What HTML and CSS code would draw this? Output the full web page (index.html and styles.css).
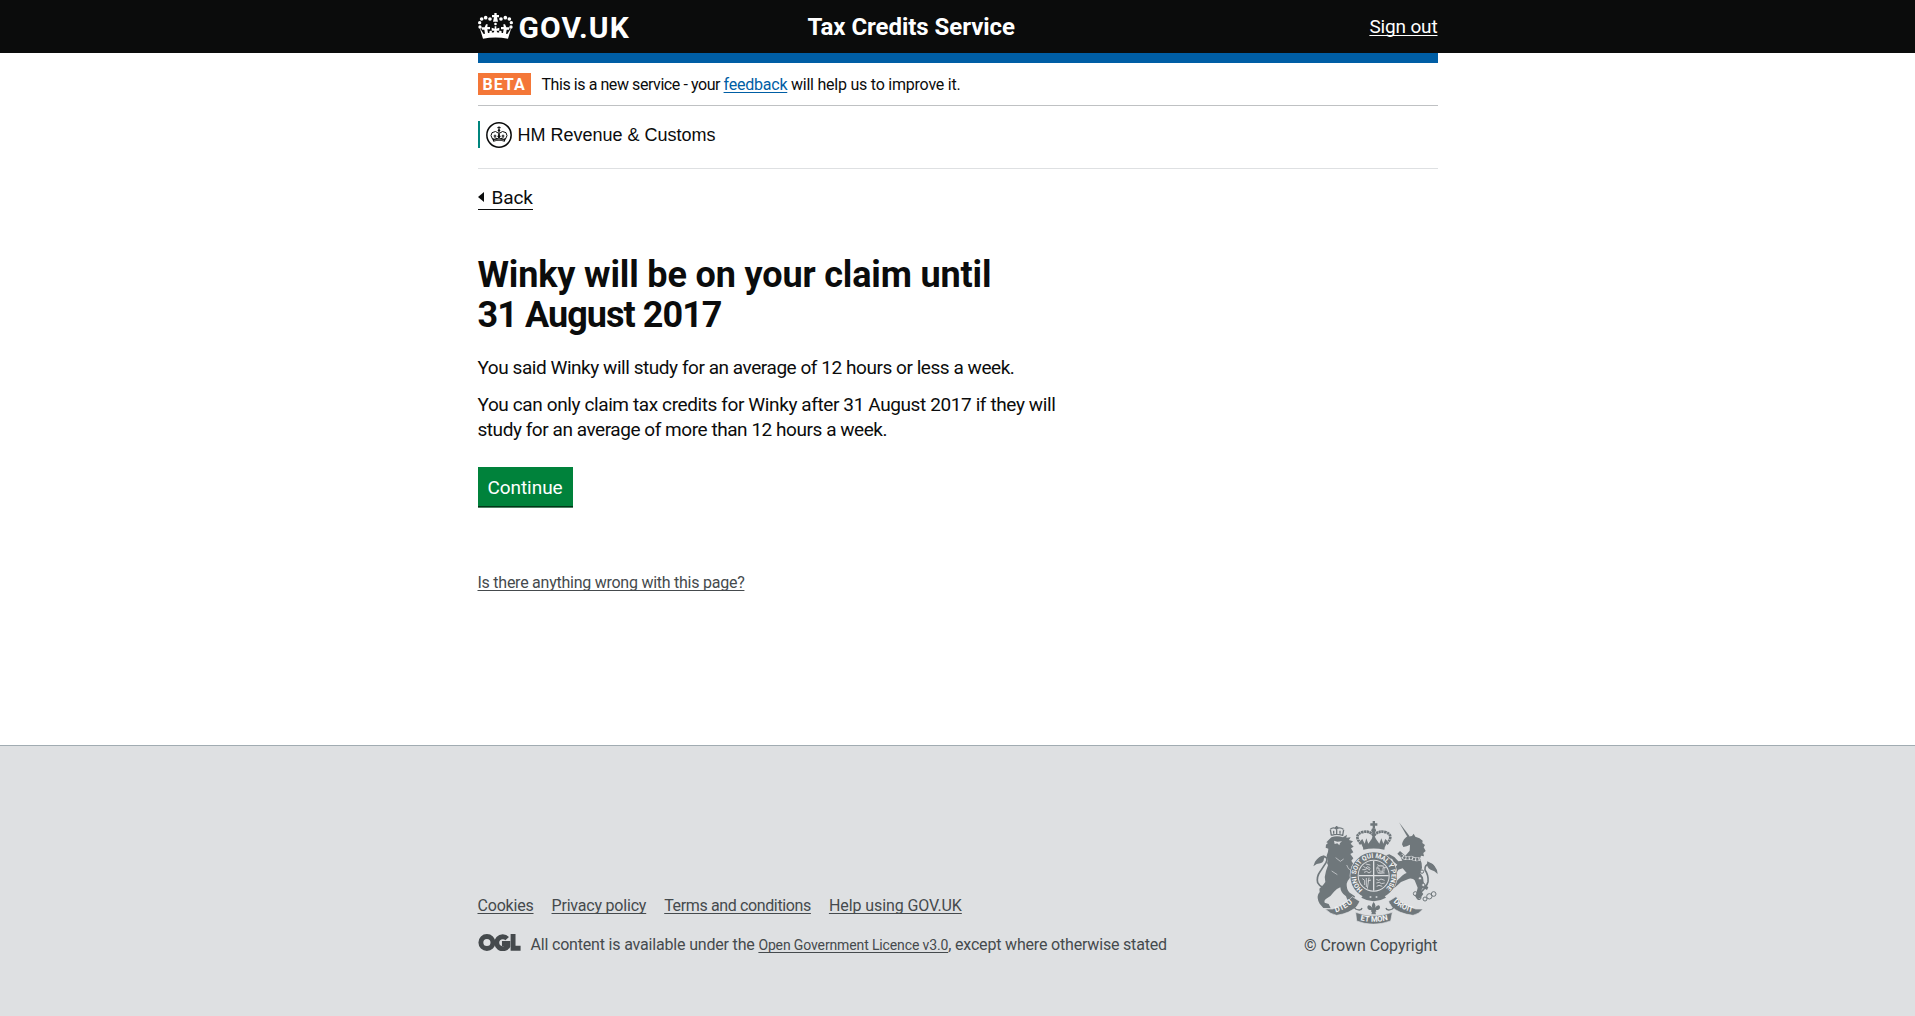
FILE: index.html
```html
<!DOCTYPE html>
<html lang="en">
<head>
<meta charset="utf-8">
<title>Tax Credits Service - GOV.UK</title>
<link rel="stylesheet" href="styles.css">
</head>
<body>
<header class="site-header">
  <div class="container header-row">
    <a class="logo" href="#">
      <svg class="logo-crown" viewBox="24 38 105 78" aria-hidden="true">
        <g fill="#fff">
          <path d="M73 38h7v6h7v7h-6l3 13h-15l3-13h-6v-7h7z"/>
          <circle cx="60" cy="56" r="5.500"/><circle cx="47" cy="52" r="5.500"/><circle cx="35" cy="56" r="5.500"/><circle cx="29" cy="67" r="5"/><circle cx="30" cy="80" r="5"/>
          <circle cx="93" cy="56" r="5.500"/><circle cx="106" cy="52" r="5.500"/><circle cx="118" cy="56" r="5.500"/><circle cx="124" cy="67" r="5"/><circle cx="123" cy="80" r="5"/>
          <circle cx="76.500" cy="71" r="4"/>
          <path d="M29 82l12 19q35-10 71 0l12-19-10 33q-38-7-75 0z"/>
          <path d="M48 72h5l-1 8h8v7h-8l3 17-9 2-3-18h-7l-2-7h10zM105 72h-5l1 8h-8v7h8l-3 17 9 2 3-18h7l2-7h-10zM74 78h5v7l9-3v9l-8 0 3 11h-13l3-11h-8v-9l9 3z"/>
          <circle cx="62" cy="95" r="4"/><circle cx="91" cy="95" r="4"/>
        </g>
      </svg>
      <span>GOV.UK</span>
    </a>
    <a class="service-name" href="#">Tax Credits Service</a>
    <a class="sign-out" href="#">Sign out</a>
  </div>
</header>

<main class="container main">
  <div class="blue-bar"></div>
  <div class="phase-banner">
    <strong class="phase-tag">BETA</strong>
    <span><span class="banner-lead">This is a new service - your </span><a href="#">feedback</a> will help us to improve it.</span>
  </div>
  <div class="organisation">
    <div class="organisation-logo">
      <svg class="organisation-crest" viewBox="0 0 78 78" aria-hidden="true">
        <circle cx="39" cy="39" r="36.500" fill="none" stroke="#0b0c0c" stroke-width="4.500"/>
        <g fill="none" stroke="#0b0c0c" stroke-width="3">
          <path d="M20 52q-9-12-2-20 11-8 20 2v15M58 52q9-12 2-20-11-8-20 2v15"/>
          <path d="M39 13v20M34 17h10M27 38v10M23 42h8M51 38v10M47 42h8M39 39v10M34 43h10"/>
        </g>
        <circle cx="39" cy="25" r="3.500" fill="#0b0c0c"/>
        <path d="M18 48l8 2 6-3 7 3 7-3 6 3 8-2-4 11q-17-5-34 0z" fill="#0b0c0c"/>
        <path d="M24 55q15-4 30 0" fill="none" stroke="#fff" stroke-width="1.500"/>
      </svg>
      <span>HM Revenue &amp; Customs</span>
    </div>
  </div>

  <a class="back" href="#"><span class="back-arrow"></span>Back</a>

  <h1>Winky will be on your claim until<br><span class="date">31 August 2017</span></h1>
  <div class="copy">
    <p>You said Winky will study for an average of 12 hours or less a week.</p>
    <p><span class="loose">You can only claim tax credits for Winky after 31 August 2017 if they will</span><br>study for an average of more than 12 hours a week.</p>
  </div>
  <button class="button" type="button">Continue</button>
  <a class="report" href="#">Is there anything wrong with this page?</a>
</main>

<footer class="footer">
  <div class="container footer-row">
    <div class="footer-meta">
      <nav class="footer-links">
        <a class="privacy" href="#">Cookies</a>
        <a class="privacy" href="#">Privacy policy</a>
        <a class="terms" href="#">Terms and conditions</a>
        <a class="help" href="#">Help using GOV.UK</a>
      </nav>
      <div class="licence">
        <svg class="ogl" viewBox="0 0 129 52" aria-hidden="true">
          <g fill="none" stroke="#454a4d" stroke-width="15">
            <circle cx="26" cy="26" r="18.500"/>
            <path d="M88 14a18.500 18.500 0 1 0 2 23v-8h-18"/>
            <path d="M106 0v43.500h23"/>
          </g>
        </svg>
        <p>All content is available under the <a href="#">Open Government Licence v3.0</a>, except where otherwise stated</p>
      </div>
    </div>
    <a class="copyright" href="#">
      <svg class="crest" viewBox="69 33 375 309" aria-hidden="true">
        <defs>
          <path id="garter" d="M216 254A59 59 0 1 1 288 253"/>
          <path id="motto-left" d="M137 307Q170 298 192 274"/>
          <path id="motto-mid" d="M207 330Q251 341 298 329"/>
          <path id="motto-right" d="M310 276Q333 300 371 307"/>
        </defs>
        <g fill="#6f777b">
          <!-- lion -->
          <path d="M124 82q17-6 35 0l12-8-2 9 13-1-5 8 12 4-7 7 9 9-8 5 7 12-9 5 9 13-6 7q10 14 9 26l-4 13q11 11 8 21-5 9-11 0l-6-9q-8 9-10 18-1 17 9 27l16 11-4 10h-19l-4-10q-16-10-17-27-11 4-19 13-9 13-21 20-10 6-7 13l12 4 6 13-22-1-11-13-4-8q-6-16 4-27l-1-10q12-10 18-20-4-16 2-33l6-17q-5-8-1-14l-3-15 4-12 1-9-8-3 1-9 6-5-5-2z"/>
          <!-- unicorn -->
          <path d="M327 37l32 42-5 5z"/>
          <path d="M353 80l13-2 5-7 5 9q14 3 22 12l-1 7 8 6-4 7 6 11-7 6 2 10-9-2-3 9q7 13 6 27l-5 17 8 12 2 15q4 9 14 15l-4 8-12-7-6 9 7 10-9 13-9 3-7-10 4-8 4-17-9-22q-5-7-17-5l-24 10-14 13-11 9-15-3 10-12 16-9 19-18q7-6 12-7l-12-14-13 4-7 14-9-7 5-13 8-9-11-9-5-9-16 1-7-10 15-4 15 8 12 13 12-2-6-12-9-9 8-8 16 14 13-15 1-18-10 5-10 2-4-8q3-16 17-25z"/>
          <!-- royal crown -->
          <path d="M218 107q33-8 67 0l-2 12q-32-7-63 0z"/>
          <path d="M210 94l7-7 7 14 5-16 6 16 10-14 6-14 7 14 10 14 6-16 6 16 6-14 7 7-8 16q-34-8-67 0z"/>
          <path d="M248 33h7v7h7v7h-7v8h-7v-8h-7v-7h7z"/>
          <circle cx="251" cy="61" r="7"/>
        </g>
        <!-- lion's crown -->
        <path d="M124 76q17-6 34 0l3-17M124 76l-3-17M121 58q8-8 18-1 11-7 21 1M140 48v24M135 52h10M131 62v9M150 62v9" fill="none" stroke="#6f777b" stroke-width="4"/>
        <g fill="none" stroke="#6f777b">
          <path d="M113 226Q96 241 83 218q-4-18 8-34l17-26q8-16-6-18-11 0-14 11" stroke-width="5"/>
          <path d="M103 136q-17 3-28 19l-5 14q10-9 21-9 13-3 12-24z" fill="#6f777b" stroke="none"/>
          <path d="M391 247q18-14 23-32 2-20-9-35-2-17 14-18 15 3 12 18" stroke-width="5"/>
          <path d="M412 154q-5 18 10 25 12 3 21 13-1-26-31-38z" fill="#6f777b" stroke="none"/>
          <path d="M213 102Q190 76 215 67q22-7 35 9M290 102Q313 76 288 67q-22-7-35 9M251 65v40" stroke-width="8" stroke-dasharray="7 1.500"/>
          <g stroke-width="3">
            <circle cx="376" cy="251" r="6"/><circle cx="387" cy="263" r="6"/><circle cx="405" cy="267" r="6"/><circle cx="418" cy="259" r="8"/><circle cx="431" cy="252" r="7"/>
          </g>
        </g>
        <path d="M332 135q13 14 31 8 13 8 27 3" fill="none" stroke="#dee0e2" stroke-width="11"/>
        <path d="M332 135q13 14 31 8 13 8 27 3" fill="none" stroke="#6f777b" stroke-width="8" stroke-dasharray="7 3"/>
        <g fill="#dee0e2" stroke="#6f777b" stroke-width="3">
          <circle cx="396" cy="185" r="5"/><circle cx="390" cy="205" r="5"/><circle cx="400" cy="225" r="5"/>
        </g>
        <path d="M132 92l10 3 14-1-6 5-2 7-6-6-8 2z" fill="#dee0e2"/>
        <path d="M137 143l14 11 10-7M170 165q3 13 16 18M125 183l17 11" fill="none" stroke="#dee0e2" stroke-width="2"/>

        <!-- garter and quartered shield -->
        <g transform="translate(0 -10)">
          <circle cx="251" cy="207" r="72" fill="#dee0e2"/>
          <circle cx="251" cy="207" r="59" fill="none" stroke="#6f777b" stroke-width="22"/>
          <circle cx="251" cy="207" r="45" fill="#6f777b"/>
          <g fill="none" stroke="#dee0e2">
            <path d="M251 162v90M206 207h90" stroke-width="4"/>
            <path d="M220 179l7 5 6-4 8 5M217 189h9l5-4 9 5M222 197l8-3 7 5 7-5M227 172l14 3M262 174l7 4 12 0M259 184h8v9l12 1v-11h10M263 199h21M217 216l7 5v14M229 214v27M237 213l-5 33M243 220l-10 3M259 218l7 3 7-4 11 4M259 229l9-2 6 4 10-2M260 239l7-3 10 3" stroke-width="2.500"/>
            <circle cx="272" cy="188" r="12" stroke-width="1.500"/>
          </g>
          <text class="crest-text" font-size="20" dy="6"><textPath href="#garter" startOffset="2" textLength="284">HONI SOIT QUI MAL Y PENSE</textPath></text>
          <path d="M221 264q30 17 60 0l7 9q-37 21-74 0z" fill="#6f777b"/>
          <path d="M239 271h5M257 271h5" stroke="#dee0e2" stroke-width="4"/>
        </g>

        <!-- motto scrolls -->
        <g fill="#6f777b" stroke="#dee0e2" stroke-width="2">
          <path d="M106 297l22 0q36-12 59-37l22 14-8 15q-21 21-61 27-19-3-34-19z"/>
          <path d="M399 297l-22 0q-39-13-59-37l-22 14 8 15q21 22 65 27 17-3 30-19z"/>
          <path d="M197 307q53 21 110 0l-5 26q-53 19-102 0z"/>
        </g>
        <g fill="none" stroke="#6f777b" stroke-width="4">
          <path d="M205 277q-18 12-8 20 16 7 19-3M299 277q18 12 8 20-16 7-19-3"/>
        </g>
        <path d="M251 276q9 11 3 19 11-15 16-5 1 10-12 10l1 5h-3l2 8h-14l2-8h-3l1-5q-13 0-12-10 5-10 16 5-6-8 3-19z" fill="#6f777b"/>
        <g class="crest-text" font-size="23">
          <text><textPath href="#motto-left" textLength="60">DIEU</textPath></text>
          <text><textPath href="#motto-mid" startOffset="4" textLength="84">ET MON</textPath></text>
          <text><textPath href="#motto-right" textLength="66">DROIT</textPath></text>
        </g>
      </svg>
      <span>© Crown Copyright</span>
    </a>
  </div>
</footer>
</body>
</html>
```
FILE: styles.css
```css
* {
  box-sizing: border-box;
}

body {
  margin: 0;
  min-height: 1016px;
  display: flex;
  flex-direction: column;
  color: #0b0c0c;
  background: #fff;
  font: 16px/20px Roboto, "Liberation Sans", sans-serif;
}

p, h1 {
  margin: 0;
}

a {
  color: inherit;
  text-decoration-thickness: 1px;
  text-underline-offset: 2px;
  text-decoration-skip-ink: none;
}

.container {
  width: 960px;
  margin: 0 auto;
}

/* Header */
.site-header {
  height: 53px;
  background: #0b0c0c;
  color: #fff;
}

.header-row {
  height: 53px;
  display: grid;
  grid-template-columns: 330px 1fr auto;
  align-items: start;
}

.header-row a {
  text-decoration: none;
}

.logo {
  display: flex;
  gap: 6px;
  padding-top: 13px;
  font: bold 30px/30px Roboto, sans-serif;
  letter-spacing: 1.100px;
}

.logo-crown {
  width: 35px;
  height: 26px;
}

.service-name {
  padding-top: 12px;
  font: bold 24px/30px Roboto, sans-serif;
  letter-spacing: -0.050px;
}

.header-row .sign-out {
  padding-top: 15px;
  font-size: 19px;
  line-height: 24px;
  letter-spacing: -0.150px;
  text-decoration: underline 1px;
  text-underline-offset: 2px;
}

/* Page content */
.main {
  height: 692px;
  display: flex;
  flex-direction: column;
  align-items: flex-start;
}

.blue-bar {
  width: 100%;
  height: 10px;
  background: #005ea5;
}

.phase-banner {
  width: 100%;
  height: 43px;
  display: flex;
  align-items: flex-start;
  gap: 11px;
  padding-top: 10px;
  border-bottom: 1px solid #bfc1c3;
  line-height: 23px;
  letter-spacing: -0.230px;
}

.banner-lead {
  letter-spacing: -0.430px;
}

.phase-banner a {
  color: #005ea5;
}

.phase-tag {
  width: 53px;
  height: 22px;
  padding-left: 5px;
  background: #f47738;
  color: #fff;
  line-height: 23px;
  letter-spacing: 1px;
}

.organisation {
  width: 100%;
  height: 63px;
  padding-top: 15px;
  border-bottom: 1px solid #dee0e2;
}

.organisation-logo {
  height: 27px;
  display: flex;
  align-items: center;
  gap: 6px;
  padding-left: 6px;
  border-left: 2px solid #00857d;
  font: 18px/27px "Liberation Sans", sans-serif;
}

.organisation-logo span {
  padding-top: 2px;
}

.organisation-crest {
  width: 26px;
  height: 26px;
}

.back {
  height: 25px;
  display: flex;
  margin-top: 16px;
  border-bottom: 1px solid #0b0c0c;
  font-size: 19px;
  line-height: 26px;
  letter-spacing: -0.100px;
  text-decoration: none;
}

.back-arrow {
  align-self: flex-start;
  margin: 7px 8px 0 0;
  border: solid transparent;
  border-width: 5px 6px 5px 0;
  border-right-color: #0b0c0c;
}

h1 {
  margin-top: 45px;
  font-size: 36px;
  line-height: 40px;
  letter-spacing: -0.150px;
}

.date {
  letter-spacing: -0.950px;
}

.copy {
  display: grid;
  gap: 12px;
  margin-top: 20px;
  font-size: 19px;
  line-height: 25px;
  letter-spacing: -0.450px;
}

.loose {
  letter-spacing: -0.390px;
}

.button {
  width: 95px;
  height: 40px;
  margin-top: 25px;
  padding: 2px 0 0;
  border: 0;
  background: #00823b;
  box-shadow: inset 0 -1px 0 #003618, 0 1px 0 #4f8163;
  color: #fff;
  font: 19px/38px Roboto, sans-serif;
  letter-spacing: -0.050px;
}

.report {
  margin-top: 66px;
  color: #454a4d;
  letter-spacing: -0.250px;
}

/* Footer */
.footer {
  flex: 1;
  background: #dee0e2;
  border-top: 1px solid #a1acb2;
  color: #454a4d;
}

.footer-row {
  display: flex;
  justify-content: space-between;
  padding-top: 75px;
}

.footer-meta {
  padding-top: 75px;
}

.footer-links {
  display: flex;
  gap: 18px;
}

.privacy {
  letter-spacing: -0.200px;
}

.terms {
  letter-spacing: -0.370px;
}

.help {
  letter-spacing: -0.080px;
}

.licence {
  display: flex;
  gap: 10px;
  margin-top: 18px;
  letter-spacing: -0.180px;
}

.licence p {
  padding-top: 1px;
}

.licence a {
  font-size: 14px;
  letter-spacing: -0.130px;
}

.ogl {
  width: 43px;
  height: 17px;
}

.copyright {
  display: flex;
  flex-direction: column;
  align-items: flex-end;
  gap: 12px;
  letter-spacing: -0.060px;
  text-decoration: none;
}

.crest {
  width: 125px;
  height: 103px;
}

.crest-text {
  fill: #f2f3f4;
  font-family: Roboto, sans-serif;
  font-weight: bold;
  letter-spacing: 0;
}
```
